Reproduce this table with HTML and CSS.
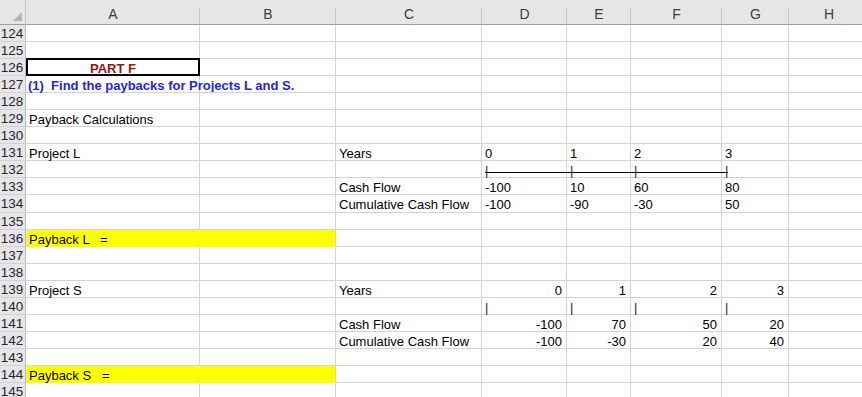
FILE: index.html
```html
<!DOCTYPE html>
<html>
<head>
<meta charset="utf-8">
<link rel="stylesheet" href="styles.css">
</head>
<body>
<div class="sheet">
  <div class="corner"><span class="tri"></span></div>
  <div class="ch">A</div><div class="ch">B</div><div class="ch">C</div><div class="ch">D</div><div class="ch">E</div><div class="ch">F</div><div class="ch">G</div><div class="ch last">H</div>

  <div class="rh">124</div><div class="c"></div><div class="c"></div><div class="c"></div><div class="c"></div><div class="c"></div><div class="c"></div><div class="c"></div><div class="c"></div>
  <div class="rh">125</div><div class="c"></div><div class="c"></div><div class="c"></div><div class="c"></div><div class="c"></div><div class="c"></div><div class="c"></div><div class="c"></div>
  <div class="rh">126</div><div class="c partf">PART F</div><div class="c"></div><div class="c"></div><div class="c"></div><div class="c"></div><div class="c"></div><div class="c"></div><div class="c"></div>
  <div class="rh">127</div><div class="c task">(1)  Find the paybacks for Projects L and S.</div><div class="c"></div><div class="c"></div><div class="c"></div><div class="c"></div><div class="c"></div><div class="c"></div><div class="c"></div>
  <div class="rh">128</div><div class="c"></div><div class="c"></div><div class="c"></div><div class="c"></div><div class="c"></div><div class="c"></div><div class="c"></div><div class="c"></div>
  <div class="rh">129</div><div class="c over">Payback Calculations</div><div class="c"></div><div class="c"></div><div class="c"></div><div class="c"></div><div class="c"></div><div class="c"></div><div class="c"></div>
  <div class="rh">130</div><div class="c"></div><div class="c"></div><div class="c"></div><div class="c"></div><div class="c"></div><div class="c"></div><div class="c"></div><div class="c"></div>
  <div class="rh">131</div><div class="c">Project L</div><div class="c"></div><div class="c">Years</div><div class="c">0</div><div class="c">1</div><div class="c">2</div><div class="c">3</div><div class="c"></div>
  <div class="rh">132</div><div class="c"></div><div class="c"></div><div class="c"></div><div class="c tick">|</div><div class="c tick">|</div><div class="c tick">|</div><div class="c tick">|</div><div class="c"></div>
  <div class="rh">133</div><div class="c"></div><div class="c"></div><div class="c">Cash Flow</div><div class="c">-100</div><div class="c">10</div><div class="c">60</div><div class="c">80</div><div class="c"></div>
  <div class="rh">134</div><div class="c"></div><div class="c"></div><div class="c">Cumulative Cash Flow</div><div class="c">-100</div><div class="c">-90</div><div class="c">-30</div><div class="c">50</div><div class="c"></div>
  <div class="rh">135</div><div class="c"></div><div class="c"></div><div class="c"></div><div class="c"></div><div class="c"></div><div class="c"></div><div class="c"></div><div class="c"></div>
  <div class="rh">136</div><div class="c yellow">Payback L   =</div><div class="c"></div><div class="c"></div><div class="c"></div><div class="c"></div><div class="c"></div><div class="c"></div>
  <div class="rh">137</div><div class="c"></div><div class="c"></div><div class="c"></div><div class="c"></div><div class="c"></div><div class="c"></div><div class="c"></div><div class="c"></div>
  <div class="rh">138</div><div class="c"></div><div class="c"></div><div class="c"></div><div class="c"></div><div class="c"></div><div class="c"></div><div class="c"></div><div class="c"></div>
  <div class="rh">139</div><div class="c">Project S</div><div class="c"></div><div class="c">Years</div><div class="c num">0</div><div class="c num">1</div><div class="c num">2</div><div class="c num">3</div><div class="c"></div>
  <div class="rh">140</div><div class="c"></div><div class="c"></div><div class="c"></div><div class="c tick">|</div><div class="c tick">|</div><div class="c tick">|</div><div class="c tick">|</div><div class="c"></div>
  <div class="rh">141</div><div class="c"></div><div class="c"></div><div class="c">Cash Flow</div><div class="c num">-100</div><div class="c num">70</div><div class="c num">50</div><div class="c num">20</div><div class="c"></div>
  <div class="rh">142</div><div class="c"></div><div class="c"></div><div class="c">Cumulative Cash Flow</div><div class="c num">-100</div><div class="c num">-30</div><div class="c num">20</div><div class="c num">40</div><div class="c"></div>
  <div class="rh">143</div><div class="c"></div><div class="c"></div><div class="c"></div><div class="c"></div><div class="c"></div><div class="c"></div><div class="c"></div><div class="c"></div>
  <div class="rh">144</div><div class="c yellow">Payback S   =</div><div class="c"></div><div class="c"></div><div class="c"></div><div class="c"></div><div class="c"></div><div class="c"></div>
  <div class="rh">145</div><div class="c"></div><div class="c"></div><div class="c"></div><div class="c"></div><div class="c"></div><div class="c"></div><div class="c"></div><div class="c"></div>

  <div class="timeline"></div>
</div>
</body>
</html>
```

FILE: styles.css
```css
html, body {
  margin: 0;
  padding: 0;
  background: #ffffff;
}

.sheet {
  position: relative;
  display: grid;
  grid-template-columns: 26px 174px 136px 146px 85px 64px 91px 67px 80px;
  grid-template-rows: 25px;
  grid-auto-rows: 17.05px;
  font-family: "Liberation Sans", Arial, sans-serif;
  font-size: 13px;
  color: #000;
  width: 869px;
  overflow: hidden;
}

.corner {
  position: relative;
  background: #e6e6e6;
  border-right: 1px solid #c6c6c6;
  border-bottom: 1px solid #9f9f9f;
  box-sizing: border-box;
}

.tri {
  position: absolute;
  right: 3px;
  bottom: 3px;
  width: 0;
  height: 0;
  border-left: 9px solid transparent;
  border-bottom: 9px solid #b4b4b4;
}

.ch {
  position: relative;
  background: #e6e6e6;
  border-bottom: 1px solid #9f9f9f;
  box-sizing: border-box;
  text-align: center;
  font-size: 14px;
  line-height: 29px;
  color: #3c3c3c;
}

.ch::after {
  content: "";
  position: absolute;
  right: 0;
  top: 8px;
  bottom: 0;
  width: 1px;
  background: #c6c6c6;
}

.ch.last::after {
  display: none;
}

.rh {
  background: #e6e6e6;
  border-right: 1px solid #bcbcbc;
  border-bottom: 1px solid #d2d2d2;
  box-sizing: border-box;
  text-align: center;
  font-size: 13.5px;
  line-height: 18px;
  color: #1e2536;
  padding-right: 1px;
}

.c {
  border-right: 1px solid #d4d4d4;
  border-bottom: 1px solid #d4d4d4;
  box-sizing: border-box;
  padding: 1px 3px 0 3px;
  line-height: 17px;
  white-space: pre;
  overflow: visible;
  min-width: 0;
}

.over {
  position: relative;
  z-index: 1;
}

.num {
  text-align: right;
  padding-right: 4px;
}

.tick {
  color: #4a0f4a;
}

.partf {
  border: 2px solid #000;
  margin: -1px 0 0 0;
  padding-top: 0;
  text-align: center;
  font-weight: bold;
  color: #9a1212;
  line-height: 17px;
  position: relative;
  z-index: 2;
}

.task {
  font-weight: bold;
  color: #2424e6;
  padding-left: 2px;
}

.yellow {
  grid-column: span 2;
  background: #ffff00;
  border-right: 1px solid #d4d4d4;
  border-bottom: none;
  padding-left: 3px;
}

.timeline {
  position: absolute;
  left: 485px;
  top: 172px;
  width: 243px;
  height: 1px;
  background: #000;
}
```
